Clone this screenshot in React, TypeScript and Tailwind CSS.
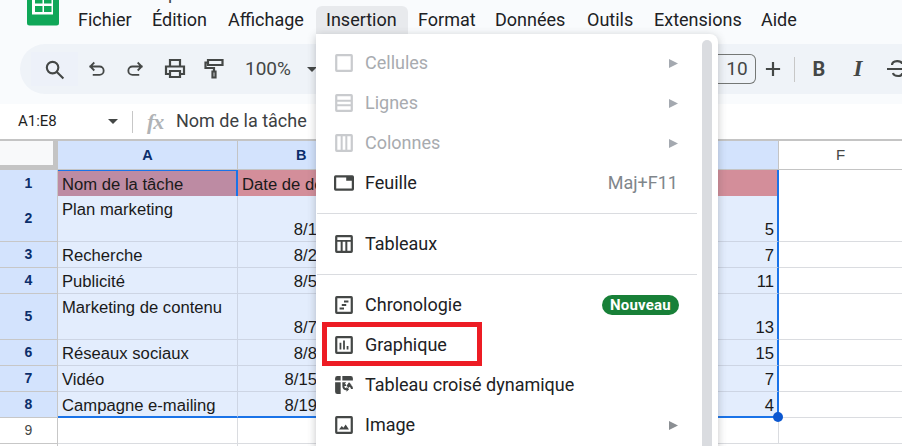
import React from "react";

const Ic = ({ children, c = "#444746" }: { children: React.ReactNode; c?: string }) => (
  <svg viewBox="0 0 18 18" className="w-5 h-5" fill={c}>{children}</svg>
);

const icons: Record<string, React.ReactNode> = {
  cell: <Ic c="#c9cbce"><path fillRule="evenodd" d="M2.500 1h13A1.500 1.500 0 0 1 17 2.500v13a1.500 1.500 0 0 1-1.500 1.500h-13A1.500 1.500 0 0 1 1 15.500v-13A1.500 1.500 0 0 1 2.500 1zM3 3v12h12V3z" /></Ic>,
  rows: <Ic c="#c9cbce"><path fillRule="evenodd" d="M2.500 1h13A1.500 1.500 0 0 1 17 2.500v13a1.500 1.500 0 0 1-1.500 1.500h-13A1.500 1.500 0 0 1 1 15.500v-13A1.500 1.500 0 0 1 2.500 1zM3 3v3h12V3zm0 4.800v2.400h12V7.800zM3 12v3h12v-3z" /></Ic>,
  cols: <Ic c="#c9cbce"><path fillRule="evenodd" d="M2.500 1h13A1.500 1.500 0 0 1 17 2.500v13a1.500 1.500 0 0 1-1.500 1.500h-13A1.500 1.500 0 0 1 1 15.500v-13A1.500 1.500 0 0 1 2.500 1zM3 3v12h3V3zm4.800 0v12h2.400V3zM12 3v12h3V3z" /></Ic>,
  sheet: <Ic><path fillRule="evenodd" d="M1.500 2h15A1.500 1.500 0 0 1 18 3.500v11a1.500 1.500 0 0 1-1.500 1.500h-15A1.500 1.500 0 0 1 0 14.500v-11A1.500 1.500 0 0 1 1.500 2zM2 6v8h14V7h-5V4H2z" /></Ic>,
  table: <Ic><path fillRule="evenodd" d="M2.500 1h13A1.500 1.500 0 0 1 17 2.500v13a1.500 1.500 0 0 1-1.500 1.500h-13A1.500 1.500 0 0 1 1 15.500v-13A1.500 1.500 0 0 1 2.500 1zM3 3v2.500h12V3zm0 4v8h3V7zm4.800 0v8h2.400V7zM12 7v8h3V7z" /></Ic>,
  timeline: <Ic><path fillRule="evenodd" d="M2.500 1h13A1.500 1.500 0 0 1 17 2.500v13a1.500 1.500 0 0 1-1.500 1.500h-13A1.500 1.500 0 0 1 1 15.500v-13A1.500 1.500 0 0 1 2.500 1zM3 3v12h12V3zM9 5h4v1.800H9zM7 8.100h4v1.800H7zM5 11.200h4V13H5z" /></Ic>,
  chart: <Ic><path fillRule="evenodd" d="M2.500 1h13A1.500 1.500 0 0 1 17 2.500v13a1.500 1.500 0 0 1-1.500 1.500h-13A1.500 1.500 0 0 1 1 15.500v-13A1.500 1.500 0 0 1 2.500 1zM3 3v12h12V3zM5 7h1.600v6H5zM8.200 5h1.600v8H8.200zM11.400 10H13v3h-1.600z" /></Ic>,
  pivot: <Ic><path d="M1 3a2 2 0 0 1 2-2h3v4H1zM7.500 1H15a2 2 0 0 1 2 2v2H7.500zM1 6.500h5V17H3a2 2 0 0 1-2-2zM7.500 6.500H11l-1.500 1.800h1.300v1.700h-1.500a2 2 0 0 0 2 2v-1.500l2.300 2.300-2.300 2.300v-1.400a3.500 3.500 0 0 1-3.800-3.700zM13.500 6.500l2.300 2.300h-1.300a3.500 3.500 0 0 1 2.500 3.500v.2h-1.700a2 2 0 0 0-1.800-2v1.400L11.200 9.600z" /></Ic>,
  image: <Ic><path fillRule="evenodd" d="M2.500 1h13A1.500 1.500 0 0 1 17 2.500v13a1.500 1.500 0 0 1-1.500 1.500h-13A1.500 1.500 0 0 1 1 15.500v-13A1.500 1.500 0 0 1 2.500 1zM3 3v12h12V3zM4.500 13l2.500-3 1.500 1.500 2-3 3 4.500z" /></Ic>,
};

const Arrow = ({ c = "#9aa0a6" }: { c?: string }) => (
  <svg viewBox="0 0 9 9" className="w-[9px] h-[9px]" fill={c}><path d="M0 0l9 4.500L0 9z" /></svg>
);

type Item = { k: string; label: string; off?: boolean; arrow?: boolean; hint?: string; badge?: boolean };

const Row = ({ k, label, off, arrow, hint, badge }: Item) => (
  <div className="flex items-center h-10 pl-[18px] pr-[40px]">
    <span className="w-[31px] shrink-0 flex">{icons[k]}</span>
    <span className={`text-[18px] -mt-[2px] ${off ? "text-[#a8abaf]" : "text-[#202124]"}`}>{label}</span>
    <span className="ml-auto flex items-center">
      {arrow && <Arrow c={off ? "#a4a9b0" : "#8b8f93"} />}
      {hint && <span className="text-[18px] -mt-[2px] text-[#80868b]">{hint}</span>}
      {badge && (
        <span className="-mr-px h-5 w-[77px] rounded-full bg-[#188038] text-white text-[15px] font-bold tracking-[0.2px] flex items-center justify-center">Nouveau</span>
      )}
    </span>
  </div>
);

const Sep = () => <div className="h-px bg-[#dadce0] mx-[1px] my-[10px] w-[380px]" />;

const Menu = () => (
  <div className="absolute left-[316px] top-[34px] w-[402px] h-[420px] bg-white rounded-tr-lg shadow-[0_2px_8px_rgba(60,64,67,0.3)] pt-[9px] font-['Roboto',sans-serif]">
    <div className="absolute right-[6px] top-[6px] bottom-0 w-[10px] rounded-t-[5px] bg-[#dadce0]" />
    <Row k="cell" label="Cellules" off arrow />
    <Row k="rows" label="Lignes" off arrow />
    <Row k="cols" label="Colonnes" off arrow />
    <Row k="sheet" label="Feuille" hint="Maj+F11" />
    <Sep />
    <Row k="table" label="Tableaux" />
    <Sep />
    <Row k="timeline" label="Chronologie" badge />
    <Row k="chart" label="Graphique" />
    <Row k="pivot" label="Tableau croisé dynamique" />
    <Row k="image" label="Image" arrow />
    <div className="absolute left-[6px] top-[288px] w-[160px] h-[44px] border-[5px] border-[#ed1c24]" />
  </div>
);

const MenuBar = () => (
  <div className="flex items-start h-[44px] pl-[27px] font-['Roboto',sans-serif] text-[18px] text-[#202124]">
    <svg viewBox="0 0 32 26" className="w-8 h-[26px] shrink-0">
      <path d="M0 0h32v23a2.500 2.500 0 0 1-2.500 2.500h-27A2.500 2.500 0 0 1 0 23z" fill="#0fa758" />
      <path d="M5 0h21v14.500H5z" fill="#fff" />
      <path d="M8 0h7.500v3.500H8zM17 0h7.500v3.500H17zM8 6h7.500v6H8zM17 6h7.500v6H17z" fill="#0fa758" />
    </svg>
    <div className="flex ml-[9px] h-[28px] mt-[6px] items-center">
      <span className="w-[74px] pl-[10px] pb-[2px]">Fichier</span>
      <span className="w-[76px] pl-[10px] pb-[2px]">Édition</span>
      <span className="w-[98px] pl-[10px] pb-[2px]">Affichage</span>
      <span className="w-[92px] pl-[10px] pb-[2px] h-[28px] flex items-center bg-[#e8eaed] rounded-t-md">Insertion</span>
      <span className="w-[77px] pl-[10px] pb-[2px]">Format</span>
      <span className="w-[92px] pl-[10px] pb-[2px]">Données</span>
      <span className="w-[67px] pl-[10px] pb-[2px]">Outils</span>
      <span className="w-[107px] pl-[10px] pb-[2px]">Extensions</span>
      <span className="pl-[10px] pb-[2px]">Aide</span>
    </div>
    <span className="absolute left-[168px] -top-[16px] leading-none text-[#444746]">p</span>
  </div>
);

const T = ({ d, w = 20, cls = "" }: { d: string; w?: number; cls?: string }) => (
  <svg viewBox="0 0 24 24" style={{ width: w, height: w }} className={cls} fill="none" stroke="#444746" strokeWidth="2.200" strokeLinecap="square"><path d={d} /></svg>
);

const Toolbar = () => (
  <div className="ml-5 h-[50px] rounded-l-[25px] bg-[#eff3f8] flex items-center font-['Roboto',sans-serif] text-[#444746] overflow-hidden">
    <div className="ml-[11px] w-[47px] h-[34px] bg-[#edf1f9] flex items-center justify-center">
      <T w={23} cls="-ml-px" d="M10 4a6 6 0 1 1 0 12 6 6 0 0 1 0-12zM15 15l5.500 5.500" />
    </div>
    <div className="w-[38px] flex justify-center"><T d="M4 9h11a5 5 0 0 1 0 10H8M8 5L4 9l4 4" /></div>
    <div className="w-[38px] flex justify-center"><T d="M20 9H9a5 5 0 0 0 0 10h7M16 5l4 4-4 4" /></div>
    <div className="w-[42px] flex justify-center">
      <T w={24} d="M7 8V3h10v5M7 17H3V9.500h18V17h-4M7 14h10v6H7z" />
    </div>
    <div className="w-[36px] flex justify-center">
      <T w={24} d="M6 3h14.500v5H6zM6 5.500H3.500v5.500H12v3M10.500 14.500h3v6h-3z" />
    </div>
    <span className="ml-[13px] text-[19px]">100%</span>
    <svg viewBox="0 0 10 5" className="ml-[16px] w-[10px] h-[5px]" fill="#444746"><path d="M0 0h10L5 5z" /></svg>
    <div className="ml-auto flex items-center">
      <div className="w-[40px] h-[30px] border border-[#747775] border-l-0 rounded-r-md flex items-center justify-center text-[19px] pl-[3px]">10</div>
      <T w={24} cls="ml-[5px]" d="M12 6v12M6 12h12" />
      <div className="w-px h-[25px] bg-[#c7c7c7] ml-[9px] mr-[12px]" />
      <span className="w-[24px] text-center text-[20px] font-bold">B</span>
      <span className="ml-[15px] w-[24px] text-center text-[23px] font-bold italic font-['Liberation_Serif',serif]">I</span>
      <svg viewBox="0 0 24 24" className="ml-[15px] mr-[-7px] w-6 h-6 shrink-0" fill="none" stroke="#444746" strokeWidth="2.200"><path d="M2 12h20M7 8c0-5 10-5 10-1M8 16c1 4 10 4 9 0" /></svg>
    </div>
  </div>
);

const Formula = () => (
  <div className="h-[35px] mt-[10px] bg-white flex items-center font-['Roboto',sans-serif]">
    <span className="ml-[18px] w-[80px] text-[15px] text-[#1f1f1f] -mt-[1px]">A1:E8</span>
    <svg viewBox="0 0 10 5" className="ml-[10px] w-[10px] h-[5px]" fill="#444746"><path d="M0 0h10L5 5z" /></svg>
    <div className="ml-[14px] w-px h-[22px] bg-[#c7c7c7]" />
    <span className="ml-[14px] w-[20px] font-['Liberation_Serif',serif] italic font-bold text-[22px] text-[#b0b3b6] tracking-[-1px]">fx</span>
    <span className="ml-[9px] -mt-[2px] text-[18px] text-[#3c4043]">Nom de la tâche</span>
  </div>
);

const rows: { h: string; a: string; b: string; e: string; top?: boolean }[] = [
  { h: "h-[46px]", a: "Plan marketing", b: "8/1", e: "5", top: true },
  { h: "h-[26px]", a: "Recherche", b: "8/2", e: "7" },
  { h: "h-[26px]", a: "Publicité", b: "8/5", e: "11" },
  { h: "h-[46px]", a: "Marketing de contenu", b: "8/7", e: "13", top: true },
  { h: "h-[26px]", a: "Réseaux sociaux", b: "8/8", e: "15" },
  { h: "h-[26px]", a: "Vidéo", b: "8/15", e: "7" },
  { h: "h-[26px]", a: "Campagne e-mailing", b: "8/19", e: "4" },
];

const cell = "border-b border-r border-[#cdd5e4] bg-[#e3edfd] text-[#1a1a1a] overflow-hidden";
const colCls = "grid grid-cols-[58px_180px_241px_300px_1fr]";

const rowHead = (sel: boolean) =>
  `flex items-center justify-center text-[14px] border-b border-r border-[#c7c7c7] ${
    sel ? "bg-[#d3e3fd] text-[#0b2e6b] font-bold" : "bg-white text-[#444746]"
  }`;

const Grid = () => (
  <div className="relative font-['Liberation_Sans',sans-serif] text-[16.650px] border-t-2 border-[#c4c4c4]">
    <div className={`${colCls} h-[29px]`}>
      <div className="bg-[#f8f9fa] border-r-[5px] border-b-[5px] border-[#c4c4c4]" />
      <div className="bg-[#d3e3fd] border-r border-b border-[#c4c4c4] pt-[2px] flex items-center justify-center text-[14.500px] font-bold text-[#0b2e6b]">A</div>
      <div className="bg-[#d3e3fd] border-b border-[#c4c4c4] pt-[2px] flex items-center pl-[58px] text-[14.500px] font-bold text-[#0b2e6b]">B</div>
      <div className="bg-[#d3e3fd] border-r border-b border-[#c4c4c4]" />
      <div className="bg-white border-b border-[#c4c4c4] flex items-center justify-center text-[15px] text-[#444746]">F</div>
    </div>
    <div className={`${colCls} h-[26px]`}>
      <div className={`${rowHead(true)} pb-[2px]`}>1</div>
      <div className="bg-[#bd8ba3] border-t border-r-2 border-b-2 border-[#1a73e8] pl-[4px] pt-[2px] text-[#1a1a1a] flex items-center">Nom de la tâche</div>
      <div className="bg-[#d38e9a] border-b border-[#c4a0aa] pl-[4px] pt-[1px] text-[#1a1a1a] flex items-center whitespace-nowrap">Date de début</div>
      <div className="bg-[#d38e9a] border-b border-r-2 border-[#1a73e8] border-b-[#c4a0aa]" />
      <div className="bg-white border-b border-[#dadce0]" />
    </div>
    {rows.map((r, i) => {
      const lead = i === 6 ? "leading-[21px] border-b-2 border-b-[#1a73e8]" : "leading-[23px]";
      return (
        <div key={r.a} className={`${colCls} ${r.h}`}>
          <div className={rowHead(true)}>{i + 2}</div>
          <div className={`${cell} pl-[4px] ${r.top ? "pt-[2px]" : "flex items-end"} ${lead}`}>{r.a}</div>
          <div className={`${cell} flex items-end ${lead}`}>
            <span className="w-[82px] pr-[3px] text-right">{r.b}</span>
          </div>
          <div className={`${cell} flex items-end justify-end pr-[3px] border-r-2 border-r-[#1a73e8] ${lead}`}>{r.e}</div>
          <div className="bg-white border-b border-[#dadce0]" />
        </div>
      );
    })}
    <div className={`${colCls} h-[26px]`}>
      <div className={rowHead(false)}>9</div>
      <div className="bg-white border-r border-b border-[#dadce0]" />
      <div className="bg-white border-r border-b border-[#dadce0]" />
      <div className="bg-white border-r border-b border-[#dadce0]" />
      <div className="bg-white border-b border-[#dadce0]" />
    </div>
    <div className={`${colCls} h-[4px]`}>
      <div className="bg-white border-r border-[#c7c7c7]" />
      <div className="border-r border-[#dadce0]" />
    </div>
    <div className="absolute left-[773px] top-[271px] w-[10px] h-[10px] rounded-full bg-[#0b57d0]" />
  </div>
);

export default function App() {
  return (
    <div className="relative w-[902px] h-[446px] overflow-hidden bg-white">
      <div className="bg-[#f9fbfd] h-[104px] -mb-[10px]">
        <MenuBar />
        <Toolbar />
      </div>
      <Formula />
      <Grid />
      <Menu />
    </div>
  );
}
